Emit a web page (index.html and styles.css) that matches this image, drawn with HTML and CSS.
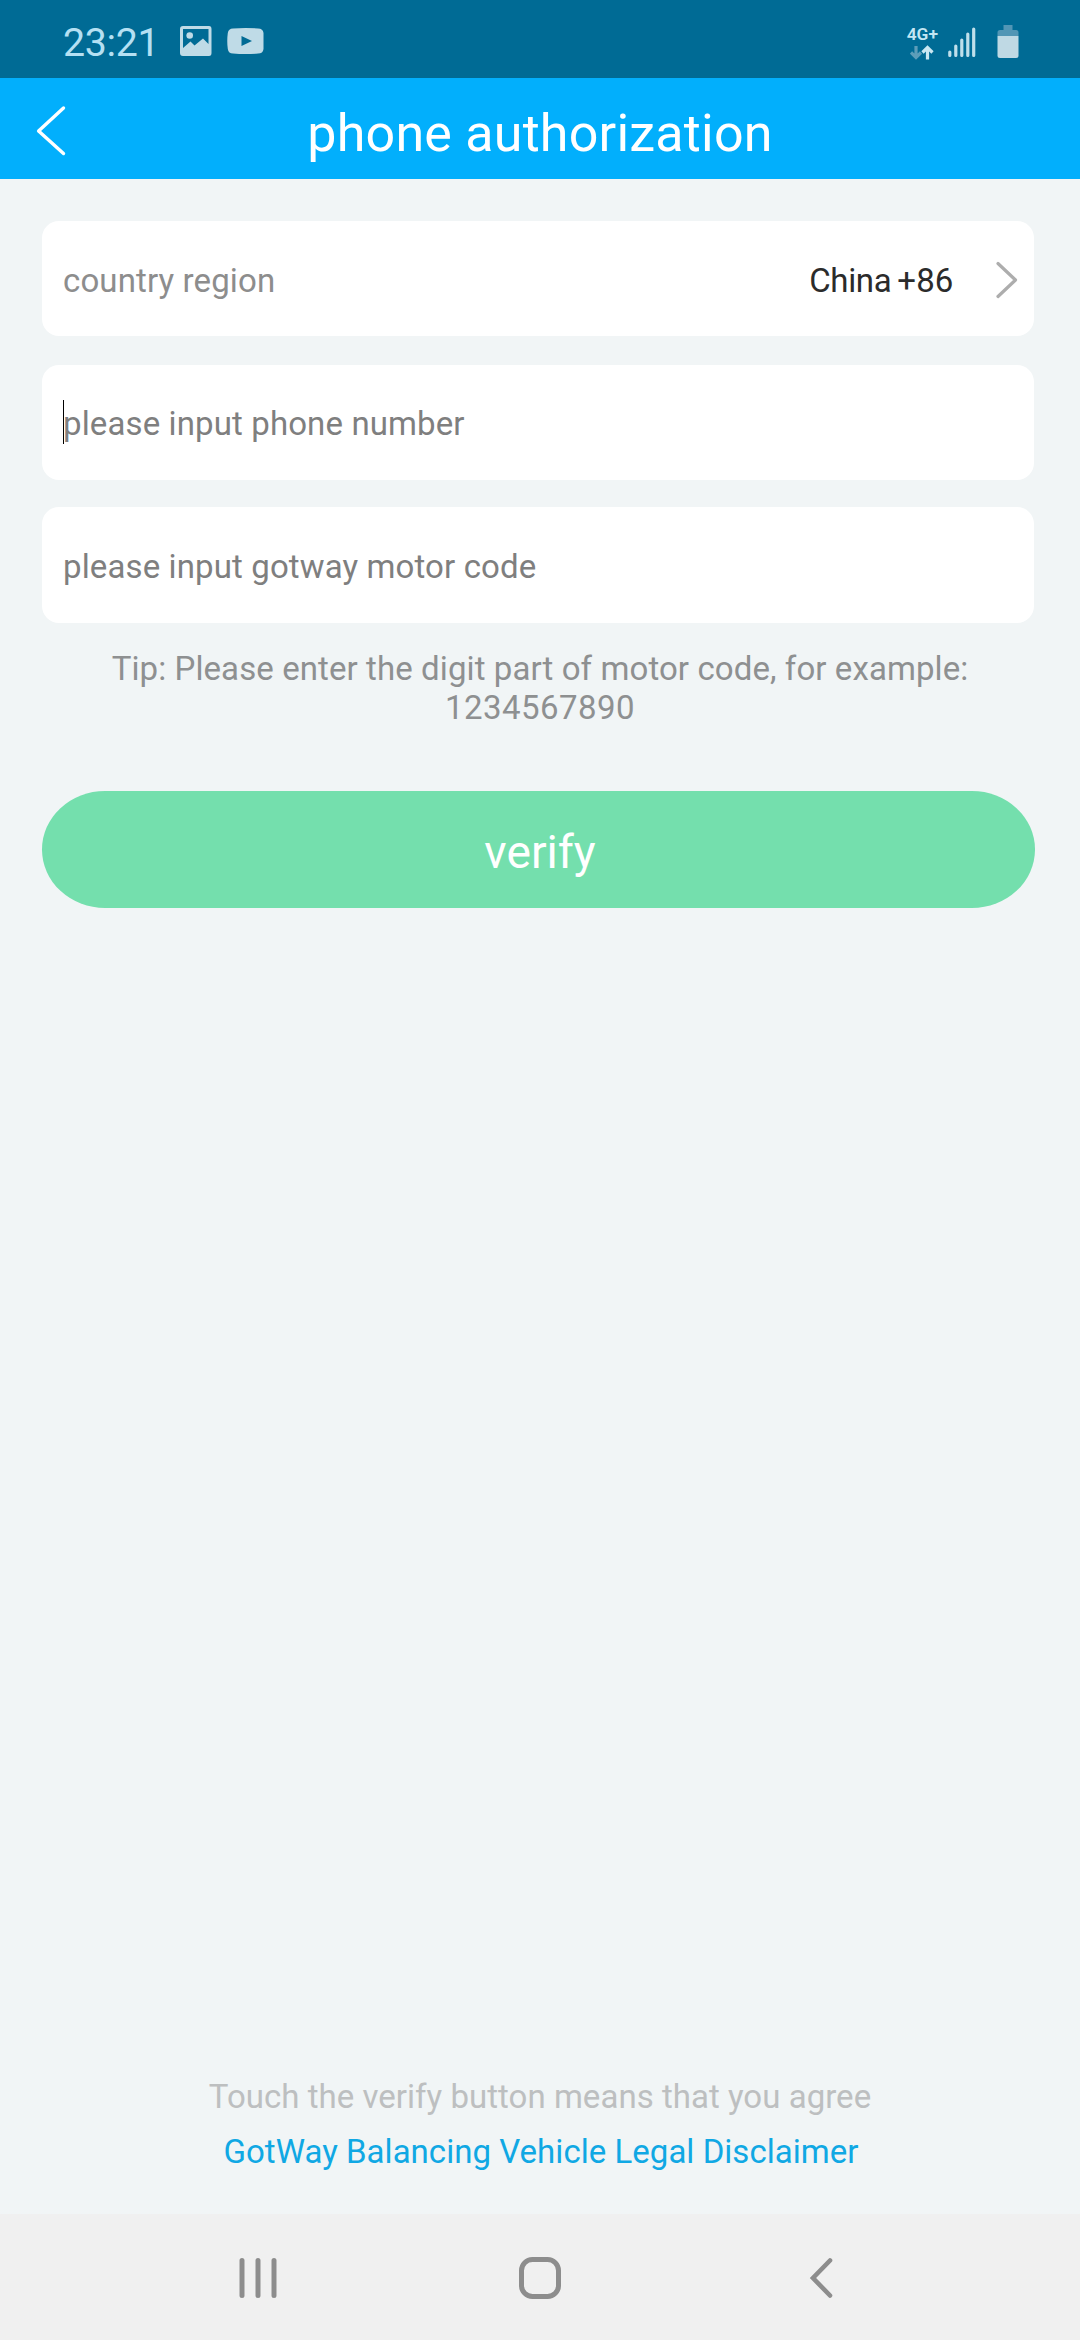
FILE: index.html
```html
<!DOCTYPE html>
<html lang="en">
<head>
<meta charset="utf-8">
<title>phone authorization</title>
<link rel="stylesheet" href="styles.css">
</head>
<body>
<div class="screen">
  <div class="status">
    <span class="clock">23:21</span>
    <svg class="i-photo" width="32" height="30" viewBox="0 0 32 30"><path fill="#bfdbe7" fill-rule="evenodd" d="M3 0H29Q31.500 0 31.500 3V27Q31.500 30 29 30H3Q0 30 0 27V3Q0 0 3 0ZM3 3V22L10.500 15.500L14.500 19.500L23 12.500L28.500 18V3Z"/><circle cx="9.700" cy="9.500" r="3.300" fill="#bfdbe7"/></svg>
    <svg class="i-video" width="37" height="26" viewBox="0 0 37 26"><path fill="#bfdbe7" fill-rule="evenodd" d="M6 .5Q18.500-.5 31 .5Q36 .5 36.500 5V21Q36 25.500 31 25.500Q18.500 26.500 6 25.500Q1.500 25.500 .8 21Q-.3 13 .8 5Q1.500 .5 6 .5ZM14.500 8V18L25 13Z"/></svg>
    <div class="net">
      <span class="gen">4G+</span>
      <svg width="24" height="15" viewBox="0 0 24 15" fill="none" stroke-width="3.200"><path stroke="#5d9db9" d="M6 1V13M1 7.500L6 12.500L11 7.500"/><path stroke="#c9e7f2" d="M17.500 14.500V2M12.500 7.500L17.500 2.500L22.500 7.500"/></svg>
    </div>
    <svg class="i-signal" width="28" height="31" viewBox="0 0 28 31" stroke="#bfdfeb" stroke-width="3.200" stroke-linecap="round"><path d="M1.800 25V28.500M7.800 19V28.500M13.800 13V28.500M19.800 7V28.500M25.700 2V28.500"/></svg>
    <svg class="i-battery" width="22" height="33" viewBox="0 0 22 33"><path fill="#5296b5" d="M6.500 0H15.500V5H19Q21.500 5 21.500 7.500V11H.5V7.500Q.5 5 3 5H6.500Z"/><path fill="#bfd9e4" d="M.5 11H21.500V30.500Q21.500 33 19 33H3Q.5 33 .5 30.500Z"/></svg>
  </div>
  <header class="bar">
    <svg class="back" width="32" height="52" viewBox="0 0 32 52"><path d="M27.500 3L2.600 26L27.500 48.500" fill="none" stroke="#fff" stroke-width="3.400" stroke-linecap="round" stroke-linejoin="round"/></svg>
    <h1 class="title">phone authorization</h1>
  </header>
  <main class="form">
    <div class="field region">
      <span class="label">country region</span>
      <span class="country">China</span>
      <span class="code">+86</span>
      <svg class="go" width="22" height="38" viewBox="0 0 22 38"><path d="M2 2.500L19.500 19L2 35.500" fill="none" stroke="#adadad" stroke-width="3.200" stroke-linecap="round" stroke-linejoin="round"/></svg>
    </div>
    <div class="field phone"><span class="caret"></span><span class="hint">please input phone number</span></div>
    <div class="field motor"><span class="hint">please input gotway motor code</span></div>
    <p class="tip">Tip: Please enter the digit part of motor code, for example:<br><span class="digits">1234567890</span></p>
    <button class="verify">verify</button>
  </main>
  <footer class="legal">
    <span>Touch the verify button means that you agree</span>
    <a class="link">GotWay Balancing Vehicle Legal Disclaimer</a>
  </footer>
  <nav class="nav">
    <svg width="38" height="42" viewBox="0 0 38 42" stroke="#8d8d8d" stroke-width="5" stroke-linecap="round"><path d="M3 3.500V38.500M19 3.500V38.500M35 3.500V38.500"/></svg>
    <svg class="home" width="42" height="42" viewBox="0 0 42 42"><rect x="2.500" y="2.500" width="37" height="37" rx="11" fill="none" stroke="#8d8d8d" stroke-width="5"/></svg>
    <svg width="24" height="42" viewBox="0 0 24 42"><path d="M21 3.500L4 21L21 38.500" fill="none" stroke="#8d8d8d" stroke-width="4.600" stroke-linecap="round" stroke-linejoin="miter"/></svg>
  </nav>
</div>
</body>
</html>
```
FILE: styles.css
```css
* { box-sizing: border-box; }
body {
  margin: 0;
  font-family: Roboto, "Noto Sans", sans-serif;
  font-size: 33px;
}
svg { display: block; flex: none; }
.screen {
  width: 1080px;
  height: 2340px;
  display: flex;
  flex-direction: column;
  background: #f1f5f6;
}
.status {
  height: 78px;
  display: flex;
  align-items: flex-start;
  padding: 0 61px 0 63px;
  background: #006b95;
}
.clock {
  width: 116.500px;
  padding-top: 9px;
  font-size: 39.300px;
  line-height: 69px;
  letter-spacing: -.3px;
  color: #b5e0f3;
}
.i-photo { margin-top: 26px; }
.i-video { margin: 28px 0 0 15px; }
.net {
  display: flex;
  flex-direction: column;
  align-items: center;
  gap: 2px;
  margin: 26px 0 0 auto;
}
.gen {
  font-size: 17.400px;
  font-weight: 600;
  line-height: 17px;
  color: #c3e6f3;
}
.i-signal { margin: 27px 0 0 10px; }
.i-battery { margin: 25px 0 0 21px; }
.bar {
  height: 101px;
  display: flex;
  padding: 0 36px;
  background: #02affc;
}
.back { margin-top: 27px; }
.title {
  flex: 1;
  margin: 0 32px 0 0;
  padding-top: 10px;
  font-size: 52px;
  font-weight: 400;
  line-height: 92px;
  letter-spacing: .22px;
  text-align: center;
  color: #fff;
}
.form {
  flex: 1;
  display: flex;
  flex-direction: column;
  padding: 42px 45px 0 42px;
}
.field {
  height: 115px;
  display: flex;
  align-items: center;
  padding: 3px 16px 0 21px;
  margin-right: 1.500px;
  border-radius: 17px;
  background: #fff;
  letter-spacing: .12px;
}
.region { padding-top: 4px; }
.label { flex: 1; color: #8d8d8d; }
.country { letter-spacing: -.35px; color: #2b2b2b; }
.code { margin-left: 6px; color: #2b2b2b; }
.go { margin: -2px 0 0 42px; }
.phone { position: relative; margin-top: 28.500px; }
.caret {
  position: absolute;
  left: 21px;
  top: 35px;
  width: 1px;
  height: 44px;
  background: #000;
}
.hint { color: #7f7f7f; }
.motor { height: 116px; margin-top: 27.500px; }
.tip {
  margin: 27px 0 0;
  padding-left: 3px;
  line-height: 38.700px;
  letter-spacing: .09px;
  text-align: center;
  white-space: nowrap;
  color: #8e9091;
}
.digits { letter-spacing: .46px; }
.verify {
  height: 117px;
  margin-top: 63.600px;
  padding: 5px 0 0 3px;
  border: 0;
  border-radius: 63px / 58.500px;
  background: #74dfad;
  font: 46.200px Roboto, "Noto Sans", sans-serif;
  color: #fff;
}
.legal {
  display: flex;
  flex-direction: column;
  align-items: center;
  padding-bottom: 35px;
  line-height: 55px;
  letter-spacing: .03px;
  color: #bdbfc0;
}
.link { color: #10a8e4; padding-left: 2px; }
.nav {
  height: 126px;
  display: flex;
  align-items: flex-start;
  justify-content: space-between;
  padding: 43px 247px 0 239px;
  background: #f0f0f0;
}
.home { margin-right: 7px; }
```
